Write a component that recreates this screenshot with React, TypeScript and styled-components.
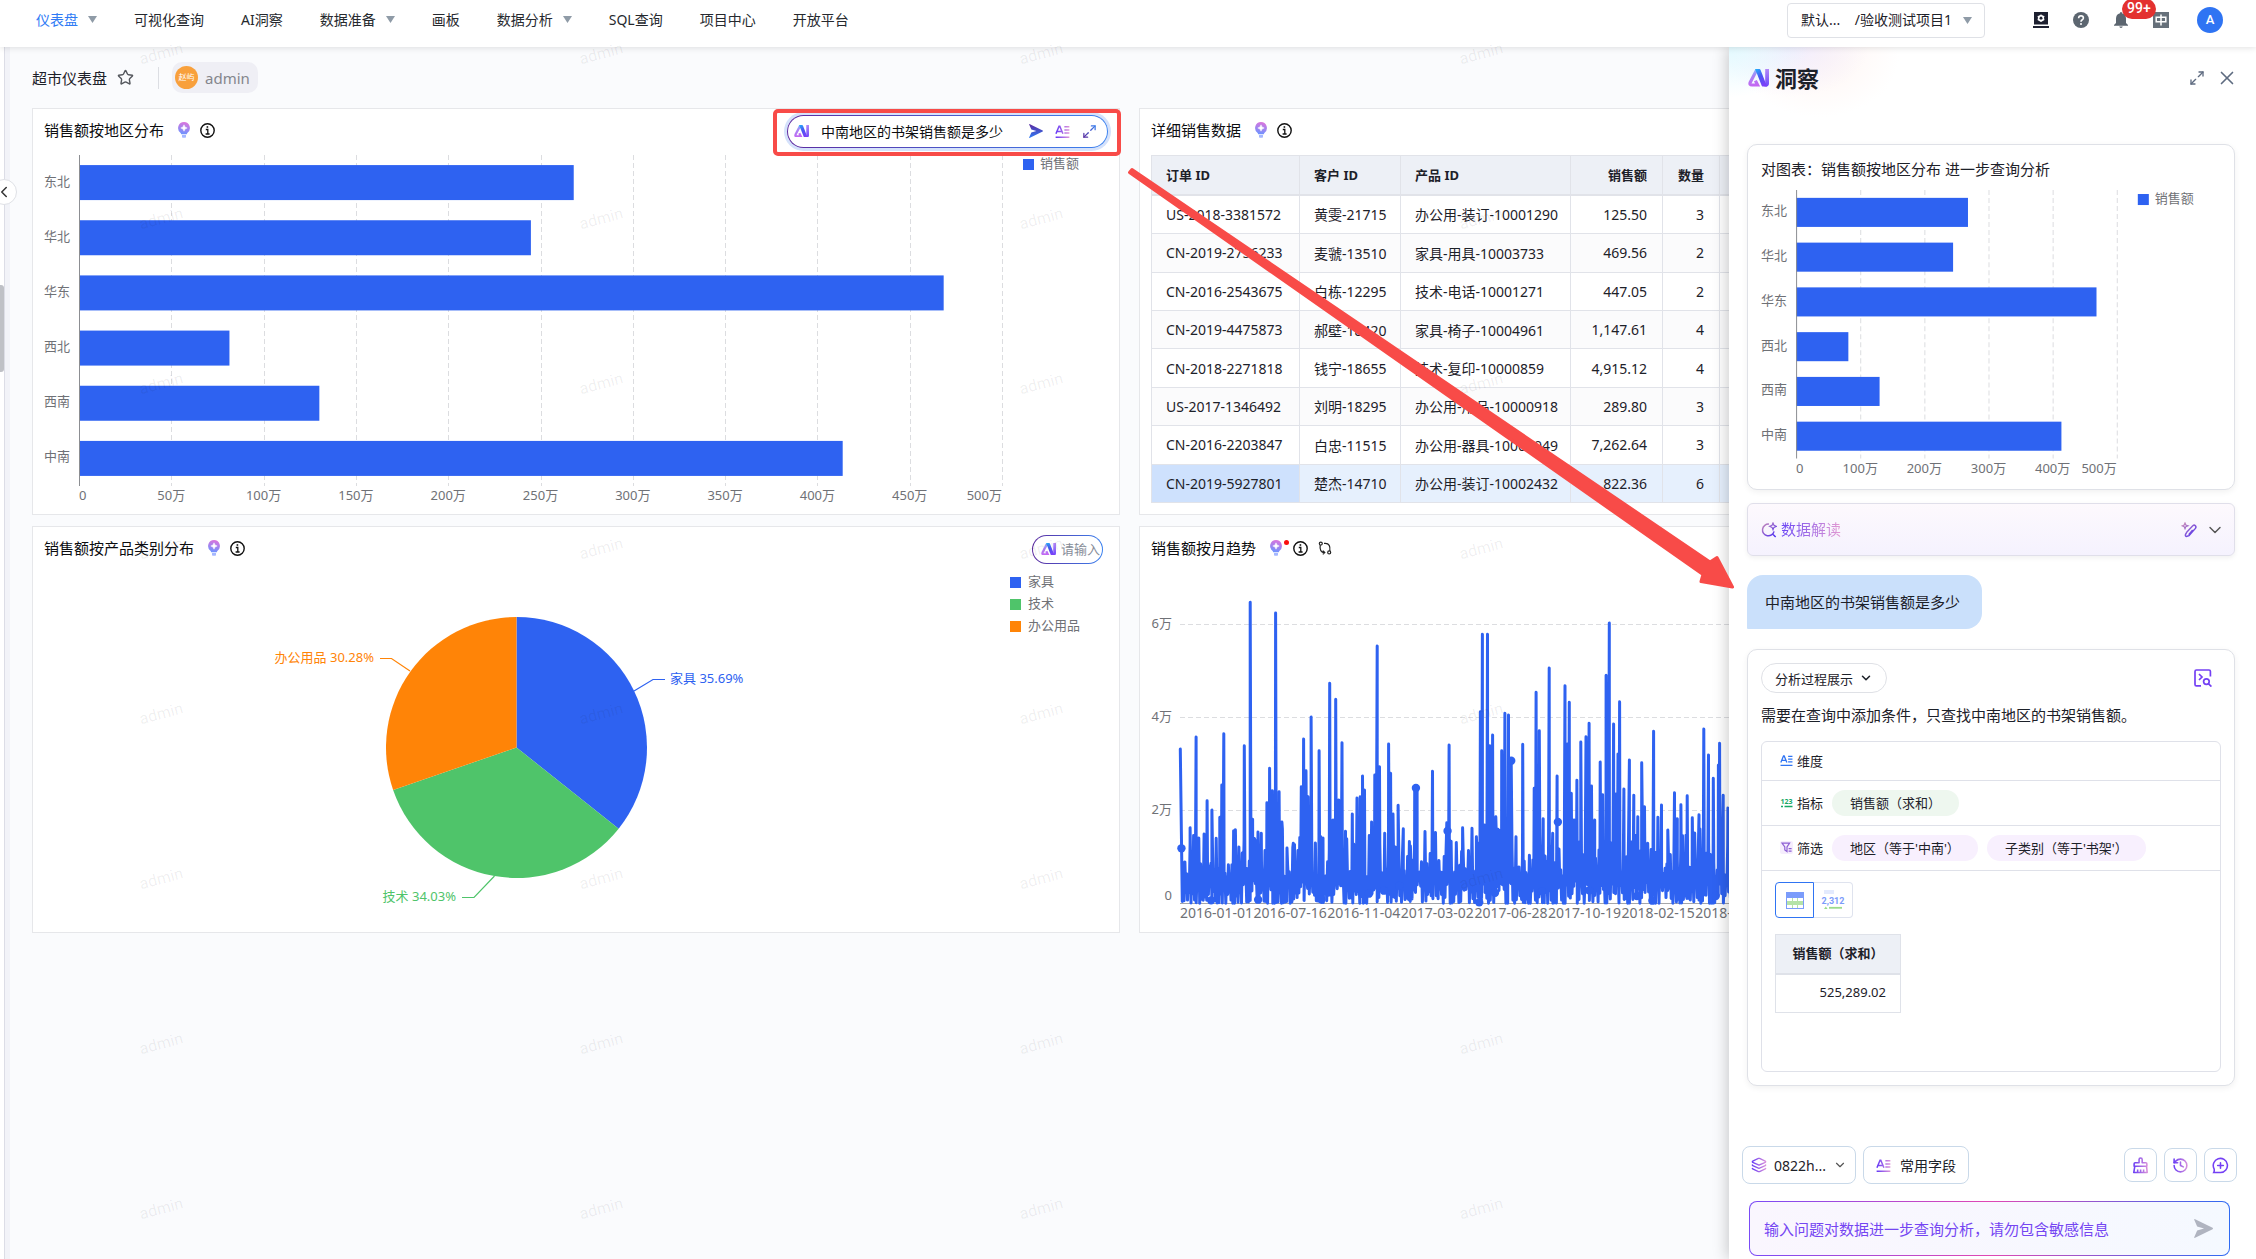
import React from "react";
import styled, { createGlobalStyle, css } from "styled-components";
import { ChevronDown, ChevronLeft, History, Layers, Maximize2, Star, X } from "lucide-react";

const FONT = `"Noto Sans", "Noto Sans CJK SC", sans-serif`;
const BLUE = "#2e62f1";

const GlobalStyle = createGlobalStyle`
  *, *::before, *::after { box-sizing: border-box; }
  body { margin: 0; background: #fafbfd; color: #1d2129; font-family: ${FONT}; font-size: 14px; }
  button, input, select { font: inherit; color: inherit; margin: 0; }
  button { cursor: pointer; }
  h1, h2, h3, p { margin: 0; font-weight: 400; }
  svg { display: block; flex: none; }
`;

/* ---------- shell ---------- */

const Page = styled.div`
  position: relative;
  display: flex;
  flex-direction: column;
  min-height: 100vh;
  overflow: hidden;
`;

const TopBar = styled.header`
  position: relative;
  z-index: 2;
  display: flex;
  align-items: center;
  justify-content: space-between;
  height: 47px;
  padding: 0 33px 7px 36px;
  background: #fff;
  box-shadow: 0 1px 6px rgba(0, 0, 0, 0.12);
`;

const Nav = styled.nav`
  display: flex;
  gap: 37px;
  padding-bottom: 2px;
`;

const NavLink = styled.a<{ $active?: boolean }>`
  display: flex;
  align-items: center;
  gap: 10px;
  color: ${(p) => (p.$active ? "#2f7bf5" : "#26292e")};
  text-decoration: none;
  white-space: nowrap;
`;

const TopTools = styled.div`
  display: flex;
  align-items: center;
`;

const ProjectPicker = styled.label`
  position: relative;
  display: block;
  margin-right: 46px;
  svg { position: absolute; right: 13px; top: 14px; pointer-events: none; }
`;

const ProjectSelect = styled.select`
  appearance: none;
  width: 198px;
  height: 35px;
  padding: 0 24px 2px 13px;
  border: 1px solid #dfe1e6;
  border-radius: 4px;
  background: #fff;
`;

const ToolButton = styled.button`
  position: relative;
  display: grid;
  place-items: center;
  width: 20px;
  height: 20px;
  margin-right: 20px;
  padding: 0;
  border: 0;
  background: none;
  color: #5c6670;
`;

const Badge = styled.span`
  position: absolute;
  left: 11px;
  top: -11px;
  z-index: 1;
  height: 20px;
  padding: 0 5px;
  border-radius: 10px;
  background: #e3312f;
  color: #fff;
  font: 500 14px/19px Roboto, sans-serif;
`;

const Avatar = styled.button`
  width: 26px;
  height: 26px;
  margin-left: 6px;
  padding: 0;
  border: 0;
  border-radius: 50%;
  background: #2f74f3;
  color: #fff;
  font: 500 13px/26px Roboto, sans-serif;
`;

const Body = styled.div`
  display: flex;
  flex: 1;
`;

const Rail = styled.aside`
  position: relative;
  flex: none;
  width: 10px;
  background: #f2f3f8;
  border-left: 4px solid #fff;
  box-shadow: inset 1px 0 0 #dcdde6;
`;

const RailThumb = styled.span`
  position: absolute;
  left: -4px;
  top: 238px;
  width: 4px;
  height: 87px;
  border-radius: 0 3px 3px 0;
  background: #bfc1c6;
`;

const RailToggle = styled.button`
  position: absolute;
  left: -13px;
  top: 132px;
  display: grid;
  place-items: center;
  width: 26px;
  height: 26px;
  padding: 0;
  border: 1px solid #dfe1e6;
  border-radius: 50%;
  background: #fff;
`;

const Main = styled.main`
  flex: 1;
  min-width: 0;
  padding: 0 29px 0 22px;
`;

const TitleRow = styled.div`
  display: flex;
  align-items: center;
  height: 61px;
  h1 { font-size: 15px; }
  svg { margin-left: 10px; }
`;

const Owner = styled.span`
  display: flex;
  align-items: center;
  gap: 7px;
  height: 31px;
  padding: 0 8px 0 3px;
  border-radius: 10px;
  background: #efeff5;
  color: #84868c;
  font-size: 15px;
`;

const OwnerFace = styled.span`
  width: 23px;
  height: 23px;
  border-radius: 50%;
  background: #f8a03c;
  color: #fff;
  font-size: 8px;
  line-height: 22px;
  text-align: center;
`;

const Divider = styled.span`
  width: 1px;
  height: 22px;
  margin: 0 13px 0 24px;
  background: #dcdee3;
`;

const Board = styled.div`
  display: grid;
  grid-template-columns: 1fr 1fr;
  gap: 11px 19px;
`;

const Card = styled.section`
  min-width: 0;
  padding: 0 11px;
  border: 1px solid #e6e7ea;
  background: #fff;
  overflow: hidden;
`;

const CardHead = styled.div`
  display: flex;
  align-items: center;
  height: 44px;
  gap: 10px;
  color: #0c0d10;
  h2 { font-size: 15px; margin-right: 4px; padding-bottom: 4px; }
  > svg { margin-bottom: 2px; }
`;

const Dot = styled.i`
  width: 5px;
  height: 5px;
  margin: 0 -6px 14px -8px;
  border-radius: 50%;
  background: #fa0f0f;
`;

const AskBar = styled.form<{ $open?: boolean }>`
  display: flex;
  align-items: center;
  margin-left: auto;
  border: 1px solid transparent;
  border-radius: 17px;
  background: linear-gradient(#fff, #fff) padding-box, linear-gradient(90deg, #5c2aa0, #3b82f0) border-box;
  ${(p) =>
    p.$open
      ? css`
          width: 321px;
          height: 33px;
          padding: 0 10px 0 6px;
          gap: 12px;
          box-shadow: 0 0 0 3px #d5e2fb;
        `
      : css`
          width: 71px;
          height: 29px;
          margin-right: 5px;
          padding: 0 2px 0 8px;
          gap: 5px;
        `}
`;

const AskInput = styled.input<{ $small?: boolean }>`
  flex: 1;
  min-width: 0;
  padding: 0 0 1px;
  border: 0;
  outline: 0;
  background: none;
  font-size: ${(p) => (p.$small ? 13 : 14)}px;
  &::placeholder { color: #878d98; opacity: 1; }
`;

const IconButton = styled.button`
  display: grid;
  place-items: center;
  padding: 0;
  border: 0;
  background: none;
  color: #5e6b80;
`;

/* ---------- data table ---------- */

const DataTable = styled.table`
  width: 100%;
  height: 348px;
  margin-top: 2px;
  border-collapse: collapse;
  table-layout: fixed;
  white-space: nowrap;
  th, td { padding: 0 15px 0 14px; border: 1px solid #e1e3e9; text-align: left; }
  th { height: 39px; background: #edf0f6; font-size: 13px; font-weight: 700; border-bottom-width: 2px; }
  tbody tr:nth-child(even) td { background: #fbfbfc; }
  tbody tr:last-child td { background: #e6f0fd; }
  tbody tr:last-child td:first-child { background: #cee1fd; }
`;

const Th = styled.th<{ $w?: number; $num?: boolean }>`
  width: ${(p) => (p.$w ? `${p.$w}px` : "auto")};
  && { text-align: ${(p) => (p.$num ? "right" : "left")}; }
`;

const Num = styled.td`
  && { text-align: right; }
`;

const ORDERS = [
  ["US-2018-3381572", "黄雯-21715", "办公用-装订-10001290", "125.50", "3"],
  ["CN-2019-2756233", "麦虢-13510", "家具-用具-10003733", "469.56", "2"],
  ["CN-2016-2543675", "白栋-12295", "技术-电话-10001271", "447.05", "2"],
  ["CN-2019-4475873", "郝壁-18420", "家具-椅子-10004961", "1,147.61", "4"],
  ["CN-2018-2271818", "钱宁-18655", "技术-复印-10000859", "4,915.12", "4"],
  ["US-2017-1346492", "刘明-18295", "办公用-用品-10000918", "289.80", "3"],
  ["CN-2016-2203847", "白忠-11515", "办公用-器具-10002949", "7,262.64", "3"],
  ["CN-2019-5927801", "楚杰-14710", "办公用-装订-10002432", "822.36", "6"],
];

/* ---------- insight drawer ---------- */

const Drawer = styled.aside`
  position: absolute;
  top: 47px;
  right: 0;
  bottom: 0;
  z-index: 1;
  display: flex;
  flex-direction: column;
  width: 527px;
  background: radial-gradient(ellipse 80px 50px at 0 0, #e3faff, transparent),
    radial-gradient(ellipse 80px 50px at 60px 0, #f1edfe, transparent),
    radial-gradient(ellipse 80px 60px at 90px 10px, #fff5f3, transparent), #fff;
  box-shadow: -2px 0 14px rgba(0, 0, 0, 0.2);
`;

const DrawerHead = styled.div`
  display: flex;
  align-items: center;
  height: 62px;
  padding: 0 18px 0 19px;
  gap: 11px;
  h2 { flex: 1; margin-left: -5px; padding-bottom: 3px; font-size: 22px; font-weight: 700; }
`;

const Thread = styled.div`
  display: flex;
  flex-direction: column;
  flex: 1;
  padding: 35px 21px 0 18px;
`;

const Panel = styled.section`
  padding: 0 13px;
  border: 1px solid #dfe1e7;
  border-radius: 10px;
  background: #fff;
  box-shadow: 0 2px 6px rgba(0, 0, 0, 0.06);
`;

const ChartPanel = styled(Panel)`
  height: 346px;
  h3 { font-size: 15px; line-height: 20px; padding: 14px 0 8px; }
`;

const ReadOut = styled.div`
  display: flex;
  align-items: center;
  gap: 8px;
  height: 53px;
  margin-top: 13px;
  padding: 0 9px 0 13px;
  border: 1px solid #e0dfea;
  border-radius: 6px;
  background: linear-gradient(#fdf9fd, #f5f2fe);
  box-shadow: 0 2px 5px rgba(0, 0, 0, 0.06);
`;

const GradientText = styled.h3`
  margin: 0 auto 0 -4px;
  padding-bottom: 2px;
  font-size: 15px;
  background: linear-gradient(90deg, #6a45f5, #e49ad2);
  -webkit-background-clip: text;
  color: transparent;
`;

const Bubble = styled.p`
  align-self: flex-start;
  margin: 19px 0 20px;
  padding: 0 18px;
  border-radius: 16px 16px 16px 1px;
  background: #cae0fb;
  font-size: 15px;
  line-height: 54px;
  min-width: 235px;
`;

const Answer = styled(Panel)`
  padding-bottom: 13px;
  p { font-size: 15px; line-height: 20px; margin: 12px 0 16px; }
`;

const AnswerTop = styled.div`
  display: flex;
  align-items: center;
  justify-content: space-between;
  padding: 13px 9px 0 0;
`;

const StepsButton = styled.button`
  display: flex;
  align-items: center;
  gap: 6px;
  height: 30px;
  padding: 0 13px;
  border: 1px solid #dfe1e6;
  border-radius: 15px;
  background: #fff;
  font-size: 13px;
`;

const Spec = styled.div`
  height: 331px;
  border: 1px solid #dfe1e9;
  border-radius: 6px;
  font-size: 13px;
`;

const SpecRow = styled.div<{ $short?: boolean }>`
  display: flex;
  align-items: center;
  gap: 9px;
  height: ${(p) => (p.$short ? 39 : 45)}px;
  padding: 0 0 1px 18px;
  border-bottom: 1px solid #dfe1e9;
`;

const SpecName = styled.span`
  display: flex;
  align-items: center;
  gap: 4px;
`;

const Chip = styled.span<{ $tone: string }>`
  padding: 0 18px;
  border-radius: 13px;
  background: ${(p) => p.$tone};
  line-height: 26px;
`;

const ViewSwitch = styled.div`
  display: flex;
  margin: 11px 0 16px 13px;
`;

const ViewButton = styled.button<{ $on?: boolean }>`
  display: grid;
  place-items: center;
  width: 39px;
  height: 36px;
  padding: 0;
  border: 1px solid ${(p) => (p.$on ? "#2f74f3" : "#dfe3ee")};
  border-left-width: ${(p) => (p.$on ? 1 : 0)}px;
  border-radius: ${(p) => (p.$on ? "4px 0 0 4px" : "0 4px 4px 0")};
  background: #fff;
`;

const ResultTable = styled.table`
  width: 126px;
  margin-left: 13px;
  border-collapse: collapse;
  th, td { height: 39px; padding: 0 14px 2px; border: 1px solid #dfe2e9; text-align: right; }
  th { padding: 0 0 2px; background: #edf0f6; text-align: center; font-weight: 700; border-bottom-width: 2px; }
`;

const Composer = styled.footer`
  padding: 0 19px 3px 13px;
`;

const ComposerTools = styled.div`
  display: flex;
  align-items: center;
  gap: 7px;
  margin-bottom: 17px;
`;

const PillButton = styled.button`
  display: flex;
  align-items: center;
  gap: 7px;
  height: 38px;
  padding: 0 8px;
  border: 1px solid #c9d9e9;
  border-radius: 8px;
  background: #fff;
`;

const FieldButton = styled(PillButton)`
  gap: 9px;
  margin-right: auto;
  padding: 0 12px;
`;

const SquareButton = styled.button`
  display: grid;
  place-items: center;
  width: 33px;
  height: 34px;
  padding: 0;
  border: 1px solid #c9d9e9;
  border-radius: 8px;
  background: #fff;
`;

const Question = styled.form`
  display: flex;
  align-items: center;
  height: 55px;
  margin: 0 7px;
  padding: 0 16px 0 14px;
  border: 1px solid transparent;
  border-radius: 8px;
  background: linear-gradient(90deg, #faf6fe, #f5f9ff) padding-box,
    linear-gradient(90deg, #7a4bf7, #e047b4 50%, #2f6bf3) border-box;
  input { flex: 1; border: 0; padding: 0; outline: 0; background: none; font-size: 15px; }
  input::placeholder { color: #7546f2; opacity: 1; }
`;

/* ---------- overlays ---------- */

const Watermarks = styled.div`
  position: absolute;
  inset: 36px 0 0 0;
  z-index: 3;
  display: grid;
  grid-template-columns: repeat(auto-fill, 440px);
  grid-auto-rows: 165px;
  padding: 10px 0 0 139px;
  overflow: hidden;
  pointer-events: none;
  font: 16px/16px Roboto, sans-serif;
  color: rgba(20, 20, 40, 0.07);
  span { width: 44px; height: 16px; transform: rotate(-15deg); }
`;

const RedFrame = styled.div`
  position: absolute;
  left: 773px;
  top: 109px;
  z-index: 4;
  width: 348px;
  height: 47px;
  border: 4px solid #f84b48;
  border-radius: 5px;
  pointer-events: none;
`;

const RedArrow = styled.svg`
  position: absolute;
  left: 1120px;
  top: 160px;
  z-index: 4;
  pointer-events: none;
`;

/* ---------- icons ---------- */

const Hidden = styled.svg`
  position: absolute;
`;

const Gradients = () => (
  <Hidden width="0" height="0" aria-hidden>
    <defs>
      <linearGradient id="violet" gradientUnits="userSpaceOnUse" x1="0" y1="0" x2="24" y2="0">
        <stop offset="0.1" stopColor="#6a3df5" />
        <stop offset="1" stopColor="#e59ad8" />
      </linearGradient>
      <linearGradient id="plum" gradientUnits="userSpaceOnUse" x1="2" y1="2" x2="20" y2="22">
        <stop offset="0" stopColor="#c98bb8" />
        <stop offset="1" stopColor="#4f2ff0" />
      </linearGradient>
      <linearGradient id="ink" gradientUnits="userSpaceOnUse" x1="2" y1="22" x2="22" y2="2">
        <stop offset="0" stopColor="#5a2a9c" />
        <stop offset="1" stopColor="#3b82f0" />
      </linearGradient>
      <linearGradient id="send" x1="0" y1="0" x2="0" y2="1">
        <stop offset="0" stopColor="#5a2aa0" />
        <stop offset="1" stopColor="#2f7bf5" />
      </linearGradient>
      <linearGradient id="bulb" x1="0.6" y1="0" x2="0.4" y2="1">
        <stop offset="0" stopColor="#dd74dc" />
        <stop offset="1" stopColor="#6d93ff" />
      </linearGradient>
      <linearGradient id="logoA" gradientUnits="userSpaceOnUse" x1="0" y1="0" x2="4" y2="17">
        <stop offset="0" stopColor="#7fc4ff" />
        <stop offset="0.45" stopColor="#a885f5" />
        <stop offset="1" stopColor="#c466f2" />
      </linearGradient>
      <linearGradient id="logoB" x1="0" y1="0" x2="0.6" y2="1">
        <stop offset="0" stopColor="#1fb4fb" />
        <stop offset="0.5" stopColor="#4a57f2" />
        <stop offset="1" stopColor="#7b3ff8" />
      </linearGradient>
      <linearGradient id="logoC" x1="0" y1="0" x2="0" y2="1">
        <stop offset="0" stopColor="#b388f8" />
        <stop offset="1" stopColor="#6b45fb" />
      </linearGradient>
    </defs>
  </Hidden>
);

const Logo = ({ w }: { w: number }) => (
  <svg width={w} viewBox="0 0 21 18" aria-hidden>
    <path d="M8.5 1.2 2.2 13.4Q1.2 16 4 16H9.6L7.4 11.6" fill="none" stroke="url(#logoA)" strokeWidth="3.2" />
    <path d="M17.2 0H21V14.5Q21 17.6 17.6 17.6H16.4L17.2 14Z" fill="url(#logoC)" />
    <path d="M7 0H11.4Q12.2 0 12.6 1L19 17.6H15.4Q14.2 17.6 13.6 16.4L9.6 6.2Z" fill="url(#logoB)" />
  </svg>
);

const Caret = () => (
  <svg width="9" height="7" viewBox="0 0 9 7" aria-hidden>
    <path d="M0 0H9L4.5 7Z" fill="#8f9ba7" />
  </svg>
);

const Bulb = () => (
  <svg width="12" height="16" viewBox="0 0 12 16" aria-hidden>
    <path d="M6 0a6 6 0 0 1 3.6 10.7Q8.9 11.4 8.8 12.2H3.2Q3.1 11.4 2.4 10.7A6 6 0 0 1 6 0Z" fill="url(#bulb)" />
    <path d="M4 13H8V15Q8 15.8 7.2 15.8H4.8Q4 15.8 4 15Z" fill="#a5b8ff" />
    <path d="M6 2.8 7 5l2.2 1L7 7 6 9.2 5 7 2.8 6 5 5Z" fill="#fff" stroke="#fff" strokeWidth="0.5" />
  </svg>
);

const Info = () => (
  <svg width="15" height="15" viewBox="0 0 15 15" fill="none" stroke="#111" aria-hidden>
    <circle cx="7.5" cy="7.5" r="6.7" strokeWidth="1.4" />
    <path d="M5.8 6.5H7.8V11M5.6 11H9.6" strokeWidth="1.3" />
    <path d="M6.6 4H8.2" strokeWidth="1.6" />
  </svg>
);

const Sync = () => (
  <svg width="14" height="14" viewBox="0 0 14 14" fill="none" stroke="#222" strokeWidth="1.2" aria-hidden>
    <circle cx="2.8" cy="2.6" r="1.5" />
    <circle cx="11.2" cy="11.4" r="1.5" />
    <path d="M2.2 4.2Q1.200 11.400 6.600 11.600M4.800 9.600 6.800 11.600 4.800 13.400M11.800 9.800Q12.800 2.600 7.400 2.400L6 2.400" />
  </svg>
);

const Plane = ({ size, fill }: { size: number; fill: string }) => (
  <svg width={size} height={size} viewBox="0 0 18 18" aria-hidden>
    <path d="M.6 0Q0 0 .2 .8L3 7.2 9.5 9 3 10.8.2 17.2Q0 18 .6 18L17.6 9.6Q18.4 9 17.6 8.4Z" fill={fill} />
  </svg>
);

const TextField = ({ size, stroke }: { size: number; stroke: string }) => (
  <svg width={size} height={size} viewBox="0 0 24 24" fill="none" stroke={stroke} strokeWidth="2.4" aria-hidden>
    <path d="M1.5 15.5 6.5 3.5h1.2l5 12M3.6 11.8h7M15 4.5h8M15 9.5h8M15 14.5h8M1 21h22" />
  </svg>
);

const SearchSpark = () => (
  <svg width="16" height="16" viewBox="0 0 24 24" fill="none" stroke="url(#plum)" strokeWidth="2.2" aria-hidden>
    <path d="M12 3.2A8.8 8.8 0 1 0 19.6 14M17 17.5 22 22.5" />
    <path d="M18 1.5 19.4 5 23 6.4 19.4 8 18 11.5 16.6 8 13 6.4 16.6 5Z" strokeWidth="1.8" />
  </svg>
);

const PenSpark = () => (
  <svg width="16" height="16" viewBox="0 0 24 24" fill="none" stroke="url(#plum)" strokeWidth="2.2" aria-hidden>
    <path d="M8.5 15.500 17.600 5.600Q19.800 3.800 21.600 5.600 23.200 7.400 21.600 9.600L12 20.400 8 21.800Q6 21.200 6.800 18.600ZM11.500 19 17.500 12" />
    <path d="M6 1.5 7.2 4.6 10.4 5.8 7.2 7 6 10 4.8 7 1.6 5.8 4.8 4.6Z" strokeWidth="1.8" />
  </svg>
);

const CodeSearch = () => (
  <svg width="18" height="18" viewBox="0 0 18 18" fill="none" stroke="#7440f4" strokeWidth="1.7" aria-hidden>
    <path d="M7 16.8H2.4Q1 16.8 1 15.4V2.4Q1 1 2.4 1H15Q16.4 1 16.4 2.4V7.6M5 5 8 8 5 11" />
    <circle cx="12.4" cy="12.6" r="2.8" />
    <path d="M14.4 14.6 17.4 17.6" />
  </svg>
);

const Broom = () => (
  <svg width="17" height="17" viewBox="0 0 24 24" fill="none" stroke="url(#violet)" strokeWidth="2.2" strokeLinejoin="round" aria-hidden>
    <path d="M10 8V3.5a2.2 2.2 0 0 1 4.4 0V8H19.5Q21 8 21 9.5V13H3V9.5Q3 8 4.5 8ZM4 13 2.5 22H21.5L20.5 13M8 22V17.5M12.2 22V17.5M16.4 22V17.5" />
  </svg>
);

const NewChat = () => (
  <svg width="17" height="17" viewBox="0 0 24 24" fill="none" stroke="#7440f4" strokeWidth="2.2" strokeLinecap="round" aria-hidden>
    <path d="M3 22H12A10 10 0 1 0 2.8 16.4Q3.8 19.4 2.4 22ZM12 8V16M8 12H16" />
  </svg>
);

const MeasureIcon = () => (
  <svg width="13" height="13" viewBox="0 0 13 13" aria-hidden>
    <text x="6.5" y="7.5" fontSize="7" fontWeight="700" textAnchor="middle" fill="#16a765" fontFamily={FONT}>123</text>
    <path d="M1 10.5H3M4.5 10.5H12.5" stroke="#16a765" strokeWidth="1.3" />
  </svg>
);

const FilterIcon = () => (
  <svg width="13" height="13" viewBox="0 0 13 13" fill="none" stroke="#8d5fd3" strokeWidth="1.2" aria-hidden>
    <rect width="13" height="13" rx="2" fill="#f5edfd" stroke="none" />
    <path d="M2 2.2H9.6L7 6V10.6L4.8 9V6ZM8.6 7.6H11.6M8.6 10.2H11.6" />
  </svg>
);

const GridView = () => (
  <svg width="18" height="17" viewBox="0 0 18 17" aria-hidden>
    <rect width="18" height="17" fill="#7b9cfb" />
    <path d="M1 6H17V16H1Z" fill="#fff" />
    <path d="M1 9H17V13H1Z" fill="#b5e3a8" />
    <path d="M6.5 6V9M11.5 6V9M6.5 13V16M11.5 13V16" stroke="#b5e3a8" />
  </svg>
);

const NumberView = () => (
  <svg width="26" height="20" viewBox="0 0 26 20" aria-hidden>
    <rect x="4" width="10" height="4" fill="#e3eafd" />
    <text x="13" y="13.5" fontSize="9" fontWeight="700" textAnchor="middle" fill="#7b9cfb" fontFamily="Roboto, sans-serif">2,312</text>
    <path d="M4 19 5.8 16.4 7.6 19Z" fill="#9bdc8b" />
    <path d="M9 17.8H22" stroke="#9bdc8b" strokeWidth="1.8" />
  </svg>
);

/* ---------- charts ---------- */

const ChartText = styled.text<{ $tone?: string }>`
  font-family: ${FONT};
  font-size: 13px;
  fill: ${(p) => p.$tone ?? "#6f7176"};
`;

const DateText = styled(ChartText)`
  font-size: 14px;
`;

const REGIONS: [string, number][] = [
  ["东北", 268],
  ["华北", 244.8],
  ["华东", 468.4],
  ["西北", 81.5],
  ["西南", 130.2],
  ["中南", 413.7],
];

type BarProps = { w: number; h: number; span: number; top: number; plot: number; bar: number; step: number; legendY: number };

const RegionBars = ({ w, h, span, top, plot, bar, step, legendY }: BarProps) => {
  const x0 = 35;
  const ticks = Array.from({ length: 500 / step + 1 }, (_, i) => i * step);
  const pitch = plot / REGIONS.length;
  return (
    <svg width="100%" viewBox={`0 0 ${w} ${h}`} role="img" aria-label="销售额按地区分布">
      {ticks.slice(1).map((t) => (
        <path key={t} d={`M${Math.round(x0 + (t / 500) * span) + 0.5} ${top}V${top + plot}`} stroke="#dcdde0" strokeDasharray="5 3" />
      ))}
      {REGIONS.map(([name, v], i) => (
        <g key={name}>
          <ChartText x={26} y={top + pitch * (i + 0.5) + 3} textAnchor="end">{name}</ChartText>
          <rect x={x0} y={top + pitch * (i + 0.5) - bar / 2} width={(v / 500) * span} height={bar} fill={BLUE} />
        </g>
      ))}
      <path d={`M${x0 + 0.5} ${top}V${top + plot}`} stroke="#8c8e92" />
      {ticks.map((t) => (
        <ChartText
          key={t}
          x={x0 + (t / 500) * span}
          y={top + plot + 14}
          textAnchor={t === 0 ? "start" : t === 500 ? "end" : "middle"}
        >
          {t ? `${t}万` : "0"}
        </ChartText>
      ))}
      <rect x={x0 + span + 21} y={legendY} width="11" height="11" fill={BLUE} />
      <ChartText x={x0 + span + 38} y={legendY + 9}>销售额</ChartText>
    </svg>
  );
};

const SLICES = [
  { name: "家具", share: 35.69, color: BLUE },
  { name: "技术", share: 34.03, color: "#4fc46a" },
  { name: "办公用品", share: 30.28, color: "#ff8407" },
];

const CategoryPie = () => {
  const cx = 472.5;
  const cy = 176.5;
  const r = 130.5;
  let from = 0;
  const at = (p: number) => {
    const a = (p / 100) * Math.PI * 2;
    return `${cx + r * Math.sin(a)} ${cy - r * Math.cos(a)}`;
  };
  return (
    <svg width="100%" viewBox="0 0 1064 361" role="img" aria-label="销售额按产品类别分布">
      {SLICES.map((s, i) => {
        const start = from;
        from += s.share;
        return (
          <g key={s.name}>
            <path d={`M${cx} ${cy}L${at(start)}A${r} ${r} 0 0 1 ${at(from)}Z`} fill={s.color} />
            <rect x="966" y={6 + i * 22} width="11" height="11" fill={s.color} />
            <ChartText x="984" y={15 + i * 22}>{s.name}</ChartText>
          </g>
        );
      })}
      <g fill="none" strokeWidth="1.2">
        <path d="M590 120 609 108.500H621" stroke={BLUE} />
        <path d="M450.500 305 430 326.500H418" stroke="#4fc46a" />
        <path d="M366 100 347.500 87.500H336" stroke="#ff8407" />
      </g>
      <ChartText x="626" y="112" $tone={BLUE}>家具 35.69%</ChartText>
      <ChartText x="412" y="330" textAnchor="end" $tone="#4fc46a">技术 34.03%</ChartText>
      <ChartText x="330" y="91" textAnchor="end" $tone="#ff8407">办公用品 30.28%</ChartText>
    </svg>
  );
};

/* Notable daily values: [sample position, level], a lower level is a higher value. */
const SPIKES: [number, number][] = [
  [128, 687], [153, 923], [168, 651], [196, 842], [208, 870], [228, 892], [233, 795], [238, 641], [263, 932], [290, 677],
  [305, 247], [311, 898], [320, 962], [333, 940], [347, 848], [354, 745], [361, 812], [369, 279], [378, 815], [385, 906],
  [398, 984], [414, 970], [434, 800], [440, 657], [446, 752], [451, 830], [459, 591], [479, 692], [489, 954], [506, 490],
  [514, 900], [521, 538], [529, 840], [537, 668], [546, 934], [563, 882], [575, 834], [583, 830], [589, 768], [594, 810],
  [612, 906], [620, 765], [626, 378], [632, 740], [645, 940], [655, 672], [660, 760], [666, 882], [679, 856], [692, 926],
  [710, 978], [721, 804], [727, 804], [766, 754], [773, 950], [802, 908], [808, 675], [826, 978], [842, 923], [877, 950],
  [887, 575], [892, 343], [898, 915], [905, 343], [911, 677], [918, 645], [926, 890], [941, 692], [949, 580], [958, 585],
  [965, 722], [977, 950], [994, 673], [1023, 805], [1028, 517], [1036, 632], [1046, 896], [1061, 444], [1070, 940], [1081, 768],
  [1101, 497], [1107, 672], [1112, 547], [1117, 820], [1124, 900], [1131, 781], [1141, 666], [1154, 650], [1162, 610], [1168, 798],
  [1176, 900], [1190, 726], [1196, 824], [1205, 466], [1213, 309], [1224, 612], [1230, 822], [1235, 702], [1239, 545], [1250, 807],
  [1264, 720], [1275, 826], [1285, 890], [1295, 728], [1302, 860], [1325, 634], [1336, 892], [1345, 855], [1361, 930], [1378, 818],
  [1385, 896], [1394, 854], [1410, 827], [1423, 893], [1440, 884], [1452, 627], [1464, 705], [1476, 775], [1489, 735], [1492, 670],
  [1501, 826], [1513, 864],
];

const MARKS: [number, number][] = [
  [131, 985], [206, 1141], [325, 1139], [485, 1138], [605, 1121], [643, 1112], [682, 1097], [724, 804], [804, 933], [884, 1147],
  [924, 1118], [965, 722], [1042, 1114], [1083, 906], [1162, 1111], [1283, 1128], [1322, 1142], [1482, 1128],
];

const toX = (t: number) => (t - 54) / 2.529;
const toY = (v: number) => v / 3 - 51;

const buildTrend = () => {
  let seed = 7;
  const rand = () => {
    seed = (seed * 16807) % 2147483647;
    return seed / 2147483647;
  };
  const points: [number, number][] = SPIKES.slice();
  for (let t = 131, i = 0; t < 2720; t += 2.2, i += 1) {
    const low = 1150 - Math.pow(rand(), 2) * 70;
    const high = 1070 - Math.pow(rand(), 2) * 150;
    points.push([t, i % 2 ? low : high]);
  }
  points.sort((a, b) => a[0] - b[0]);
  return "M" + points.map(([t, v]) => `${toX(t).toFixed(1)} ${toY(v).toFixed(1)}`).join("L");
};

const TREND = buildTrend();
const DATES = ["2016-01-01", "2016-07-16", "2016-11-04", "2017-03-02", "2017-06-28", "2017-10-19", "2018-02-15", "2018-06-09"];

const MonthTrend = () => (
  <svg width="100%" viewBox="0 0 1064 361" role="img" aria-label="销售额按月趋势">
    {[6, 4, 2].map((n, i) => (
      <g key={n}>
        <path d={`M29 ${53.5 + i * 93}H1064`} stroke="#dcdde0" strokeDasharray="5 3" />
        <ChartText x="21" y={57 + i * 93} textAnchor="end">{`${n}万`}</ChartText>
      </g>
    ))}
    <ChartText x="21" y="329" textAnchor="end">0</ChartText>
    <path d="M29 332.500H1064" stroke="#a5a6a9" />
    <path d={TREND} fill="none" stroke={BLUE} strokeWidth="3" strokeLinejoin="round" strokeLinecap="round" />
    {MARKS.map(([t, v]) => (
      <circle key={t} cx={toX(t)} cy={toY(v)} r="4.2" fill={BLUE} />
    ))}
    {DATES.map((d, i) => (
      <DateText key={d} x={29 + i * 73.6} y="347">{d}</DateText>
    ))}
  </svg>
);

/* ---------- page ---------- */

const NAV: [string, boolean][] = [
  ["仪表盘", true],
  ["可视化查询", false],
  ["AI洞察", false],
  ["数据准备", true],
  ["画板", false],
  ["数据分析", true],
  ["SQL查询", false],
  ["项目中心", false],
  ["开放平台", false],
];

export default function App() {
  return (
    <Page>
      <GlobalStyle />
      <Gradients />
      <TopBar>
        <Nav>
          {NAV.map(([label, menu], i) => (
            <NavLink key={label} href="#" $active={i === 0}>
              {label}
              {menu && <Caret />}
            </NavLink>
          ))}
        </Nav>
        <TopTools>
          <ProjectPicker>
            <ProjectSelect aria-label="项目" defaultValue="p1">
              <option value="p1">{"默认...\u00a0\u00a0\u00a0\u00a0/验收测试项目1"}</option>
            </ProjectSelect>
            <Caret />
          </ProjectPicker>
          <ToolButton aria-label="系统设置">
            <svg width="16" height="16" viewBox="0 0 16 16" aria-hidden>
              <path d="M1 0H15V12.400H1ZM0 14H16V16H0Z" fill="#1d2030" />
              <circle cx="8" cy="6.2" r="2.4" fill="none" stroke="#fff" strokeWidth="1.6" />
              <path d="M8 2.400V10M4.700 4.300 11.300 8.100M4.700 8.100 11.300 4.300" stroke="#fff" strokeWidth="1.2" />
              <circle cx="8" cy="6.2" r="1.4" fill="#1d2030" />
            </svg>
          </ToolButton>
          <ToolButton aria-label="帮助">
            <svg width="16" height="16" viewBox="0 0 16 16" fill="none" aria-hidden>
              <circle cx="8" cy="8" r="8" fill="#5c6670" />
              <path d="M5.600 6.200Q5.700 3.800 8 3.800 10.400 3.900 10.400 6 10.300 7.300 9 8 8 8.600 8 9.800" stroke="#fff" strokeWidth="1.6" />
              <circle cx="8" cy="12" r="1" fill="#fff" />
            </svg>
          </ToolButton>
          <ToolButton aria-label="通知">
            <svg width="14" height="16" viewBox="0 0 14 16" fill="#5c6670" aria-hidden>
              <path d="M7 0Q8 0 8 1.200 12 2.200 12 6.600V11L14 13V13.800H0V13L2 11V6.600Q2 2.200 6 1.200 6 0 7 0ZM5.200 14.600H8.800Q8.400 16 7 16T5.200 14.600Z" />
            </svg>
            <Badge>99+</Badge>
          </ToolButton>
          <ToolButton aria-label="语言">
            <svg width="16" height="16" viewBox="0 0 16 16" fill="none" aria-hidden>
              <rect width="16" height="16" fill="#66707a" />
              <path d="M3.200 5.200H12.800V9.800H3.200ZM8 2.400V13.600" stroke="#fff" strokeWidth="1.500" />
            </svg>
          </ToolButton>
          <Avatar aria-label="账户">A</Avatar>
        </TopTools>
      </TopBar>

      <Body>
        <Rail>
          <RailThumb />
          <RailToggle aria-label="收起">
            <ChevronLeft size={18} color="#333" />
          </RailToggle>
        </Rail>
        <Main>
          <TitleRow>
            <h1>超市仪表盘</h1>
            <Star size={17} color="#55585e" strokeWidth={2} />
            <Divider />
            <Owner>
              <OwnerFace>赵屿</OwnerFace>
              admin
            </Owner>
          </TitleRow>
          <Board>
            <Card>
              <CardHead>
                <h2>销售额按地区分布</h2>
                <Bulb />
                <Info />
                <AskBar $open>
                  <Logo w={15} />
                  <AskInput aria-label="提问" defaultValue="中南地区的书架销售额是多少" />
                  <IconButton type="button" aria-label="发送"><Plane size={14} fill="url(#send)" /></IconButton>
                  <IconButton type="button" aria-label="常用字段"><TextField size={15} stroke="url(#violet)" /></IconButton>
                  <IconButton type="button" aria-label="展开"><Maximize2 size={15} stroke="url(#ink)" /></IconButton>
                </AskBar>
              </CardHead>
              <RegionBars w={1064} h={361} span={923} top={2} plot={331} bar={35} step={50} legendY={6} />
            </Card>

            <Card>
              <CardHead>
                <h2>详细销售数据</h2>
                <Bulb />
                <Info />
              </CardHead>
              <DataTable>
                <thead>
                  <tr>
                    <Th $w={148}>订单 ID</Th>
                    <Th $w={101}>客户 ID</Th>
                    <Th $w={170}>产品 ID</Th>
                    <Th $w={92} $num>销售额</Th>
                    <Th $w={57} $num>数量</Th>
                    <Th />
                  </tr>
                </thead>
                <tbody>
                  {ORDERS.map(([id, customer, product, amount, count]) => (
                    <tr key={id}>
                      <td>{id}</td>
                      <td>{customer}</td>
                      <td>{product}</td>
                      <Num>{amount}</Num>
                      <Num>{count}</Num>
                      <td />
                    </tr>
                  ))}
                </tbody>
              </DataTable>
            </Card>

            <Card>
              <CardHead>
                <h2>销售额按产品类别分布</h2>
                <Bulb />
                <Info />
                <AskBar>
                  <Logo w={15} />
                  <AskInput $small aria-label="提问" placeholder="请输入" />
                </AskBar>
              </CardHead>
              <CategoryPie />
            </Card>

            <Card>
              <CardHead>
                <h2>销售额按月趋势</h2>
                <Bulb />
                <Dot />
                <Info />
                <Sync />
              </CardHead>
              <MonthTrend />
            </Card>
          </Board>
        </Main>
      </Body>

      <Drawer>
        <DrawerHead>
          <Logo w={21} />
          <h2>洞察</h2>
          <IconButton aria-label="放大"><Maximize2 size={16} /></IconButton>
          <IconButton aria-label="关闭"><X size={22} strokeWidth={1.8} /></IconButton>
        </DrawerHead>
        <Thread>
          <ChartPanel>
            <h3>对图表：销售额按地区分布 进一步查询分析</h3>
            <RegionBars w={459} h={300} span={320} top={3} plot={268} bar={29} step={100} legendY={7} />
          </ChartPanel>
          <ReadOut>
            <SearchSpark />
            <GradientText>数据解读</GradientText>
            <IconButton aria-label="编辑"><PenSpark /></IconButton>
            <IconButton aria-label="展开解读"><ChevronDown size={20} strokeWidth={1.7} color="#555" /></IconButton>
          </ReadOut>
          <Bubble>中南地区的书架销售额是多少</Bubble>
          <Answer>
            <AnswerTop>
              <StepsButton>
                分析过程展示
                <ChevronDown size={14} strokeWidth={2.6} />
              </StepsButton>
              <IconButton aria-label="查看查询"><CodeSearch /></IconButton>
            </AnswerTop>
            <p>需要在查询中添加条件，只查找中南地区的书架销售额。</p>
            <Spec>
              <SpecRow $short>
                <SpecName><TextField size={13} stroke="#2f74f3" />维度</SpecName>
              </SpecRow>
              <SpecRow>
                <SpecName><MeasureIcon />指标</SpecName>
                <Chip $tone="#eef7ef">销售额（求和）</Chip>
              </SpecRow>
              <SpecRow>
                <SpecName><FilterIcon />筛选</SpecName>
                <Chip $tone="#f8f0fe">地区（等于'中南'）</Chip>
                <Chip $tone="#f8f0fe">子类别（等于'书架'）</Chip>
              </SpecRow>
              <ViewSwitch>
                <ViewButton $on aria-label="表格"><GridView /></ViewButton>
                <ViewButton aria-label="指标卡"><NumberView /></ViewButton>
              </ViewSwitch>
              <ResultTable>
                <thead><tr><th>销售额（求和）</th></tr></thead>
                <tbody><tr><td>525,289.02</td></tr></tbody>
              </ResultTable>
            </Spec>
          </Answer>
        </Thread>
        <Composer>
          <ComposerTools>
            <PillButton>
              <Layers size={16} stroke="url(#violet)" />
              0822h...
              <ChevronDown size={14} color="#555" />
            </PillButton>
            <FieldButton>
              <TextField size={15} stroke="url(#violet)" />
              常用字段
            </FieldButton>
            <SquareButton aria-label="清空"><Broom /></SquareButton>
            <SquareButton aria-label="历史"><History size={17} stroke="url(#violet)" strokeWidth={2.2} /></SquareButton>
            <SquareButton aria-label="新对话"><NewChat /></SquareButton>
          </ComposerTools>
          <Question>
            <input aria-label="问题" placeholder="输入问题对数据进一步查询分析，请勿包含敏感信息" />
            <IconButton type="button" aria-label="提交"><Plane size={19} fill="#b0b4c0" /></IconButton>
          </Question>
        </Composer>
      </Drawer>

      <Watermarks aria-hidden>
        {Array.from({ length: 32 }, (_, i) => (
          <span key={i}>admin</span>
        ))}
      </Watermarks>
      <RedFrame />
      <RedArrow width="630" height="440" viewBox="0 0 630 440" aria-hidden>
        <path
          d="M9.500 12.500 12 9.500 590 402 597 397.500 612.500 427 581 421.500 583 414.500Z"
          fill="#f84b48"
          stroke="#f84b48"
          strokeWidth="3"
          strokeLinejoin="round"
        />
      </RedArrow>
    </Page>
  );
}
